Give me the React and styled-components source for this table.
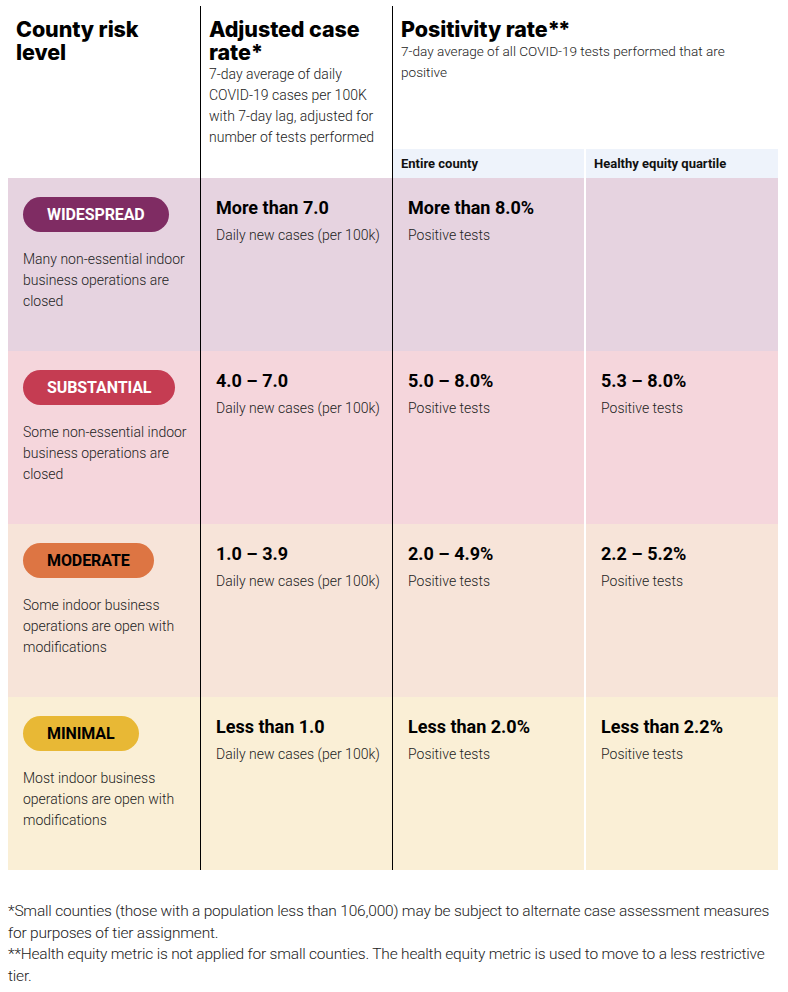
import React from "react";
import styled, { createGlobalStyle } from "styled-components";

const Global = createGlobalStyle`
  html, body { margin: 0; padding: 0; background: #fff; }
  body { font-family: "Roboto", "Liberation Sans", sans-serif; color: #222; }
`;

const Page = styled.div`
  padding: 6px 10px 20px 8px;
`;

const Table = styled.div`
  display: grid;
  grid-template-columns: 192px 192px 192px 194px;
  grid-template-rows: 143px 29px repeat(4, 173px);
`;

const dividers = {
  black: "border-left: 1px solid #000;",
  white: "border-left: 2px solid #fff;",
  none: "",
};

const HeadCell = styled.div`
  grid-column: ${(p) => p.$col};
  grid-row: ${(p) => p.$row};
  padding: 12px ${(p) => p.$padRight || "4px"} 0 8px;
  ${(p) => dividers[p.$divider || "none"]}
`;

const Heading = styled.h2`
  margin: 0;
  font-family: "Inter", "DejaVu Sans", sans-serif;
  font-weight: 800;
  font-size: 21.5px;
  line-height: 23px;
  letter-spacing: -0.1px;
  color: #000;
`;

const Stars = styled.span`
  letter-spacing: -2px;
`;

const HeadDesc = styled.p`
  margin: 0;
  font-size: ${(p) => p.$size || "14px"};
  font-weight: 300;
  line-height: 21px;
  color: #222;
`;

const SubHead = styled.div`
  grid-column: ${(p) => p.$col};
  grid-row: 2;
  background: #eef3fb;
  display: flex;
  align-items: center;
  padding: 0 8px;
  font-size: 13px;
  font-weight: 700;
  color: #111;
  ${(p) => dividers[p.$divider || "none"]}
`;

const Cell = styled.div`
  background: ${(p) => p.$bg};
  padding: ${(p) => (p.$first ? "19px 4px 0 15px" : "18px 4px 0 15px")};
  ${(p) => dividers[p.$divider || "none"]}
`;

const Pill = styled.span`
  display: inline-flex;
  align-items: center;
  height: 35px;
  padding: 0 24px;
  border-radius: 18px;
  background: ${(p) => p.$bg};
  color: ${(p) => p.$fg};
  font-size: 16px;
  font-weight: 700;
  letter-spacing: -0.1px;
  text-transform: uppercase;
`;

const TierDesc = styled.p`
  margin: 17px 0 0 0;
  font-size: 14px;
  font-weight: 300;
  line-height: 21px;
  color: #222;
`;

const Value = styled.div`
  font-size: 18px;
  font-weight: 700;
  line-height: 24px;
  color: #000;
`;

const Unit = styled.div`
  margin-top: 5px;
  font-size: 14px;
  font-weight: 300;
  line-height: 21px;
  color: #222;
`;

const Footer = styled.div`
  margin-top: 31px;
  font-family: "Roboto", sans-serif;
  font-weight: 300;
  font-size: 15.5px;
  line-height: 21.5px;
  letter-spacing: -0.2px;
  color: #222;
`;

const Note = styled.p`
  margin: 0;
`;

const tiers = [
  {
    name: "Widespread",
    pill: "#7f2c63",
    fg: "#fff",
    bg: "#e6d3e0",
    desc: "Many non-essential indoor business operations are closed",
    cases: "More than 7.0",
    county: "More than 8.0%",
    equity: null,
  },
  {
    name: "Substantial",
    pill: "#c53c52",
    fg: "#fff",
    bg: "#f5d6dc",
    desc: "Some non-essential indoor business operations are closed",
    cases: "4.0 – 7.0",
    county: "5.0 – 8.0%",
    equity: "5.3 – 8.0%",
  },
  {
    name: "Moderate",
    pill: "#dd7543",
    fg: "#000",
    bg: "#f7e4d9",
    desc: "Some indoor business operations are open with modifications",
    cases: "1.0 – 3.9",
    county: "2.0 – 4.9%",
    equity: "2.2 – 5.2%",
  },
  {
    name: "Minimal",
    pill: "#e8b835",
    fg: "#000",
    bg: "#faefd6",
    desc: "Most indoor business operations are open with modifications",
    cases: "Less than 1.0",
    county: "Less than 2.0%",
    equity: "Less than 2.2%",
  },
];

export default function App() {
  return (
    <>
      <Global />
      <Page>
        <Table>
          <HeadCell $col="1" $row="1 / 3" $padRight="40px">
            <Heading>County risk level</Heading>
          </HeadCell>
          <HeadCell $col="2" $row="1 / 3" $divider="black">
            <Heading>Adjusted case rate*</Heading>
            <HeadDesc>
              7-day average of daily COVID-19 cases per 100K with 7-day lag,
              adjusted for number of tests performed
            </HeadDesc>
          </HeadCell>
          <HeadCell $col="3 / 5" $row="1" $divider="black">
            <Heading>
              Positivity rate<Stars>**</Stars>
            </Heading>
            <HeadDesc $size="13.6px">
              7-day average of all COVID-19 tests performed that are positive
            </HeadDesc>
          </HeadCell>
          <SubHead $col="3" $divider="black">Entire county</SubHead>
          <SubHead $col="4" $divider="white">Healthy equity quartile</SubHead>

          {tiers.map((t) => (
            <React.Fragment key={t.name}>
              <Cell $bg={t.bg} $first>
                <Pill $bg={t.pill} $fg={t.fg}>{t.name}</Pill>
                <TierDesc>{t.desc}</TierDesc>
              </Cell>
              <Cell $bg={t.bg} $divider="black">
                <Value>{t.cases}</Value>
                <Unit>Daily new cases (per 100k)</Unit>
              </Cell>
              <Cell $bg={t.bg} $divider="black">
                <Value>{t.county}</Value>
                <Unit>Positive tests</Unit>
              </Cell>
              <Cell $bg={t.bg} $divider="white">
                {t.equity && (
                  <>
                    <Value>{t.equity}</Value>
                    <Unit>Positive tests</Unit>
                  </>
                )}
              </Cell>
            </React.Fragment>
          ))}
        </Table>
        <Footer>
          <Note>
            *Small counties (those with a population less than 106,000) may be
            subject to alternate case assessment measures for purposes of tier
            assignment.
          </Note>
          <Note>
            **Health equity metric is not applied for small counties. The health
            equity metric is used to move to a less restrictive tier.
          </Note>
        </Footer>
      </Page>
    </>
  );
}
